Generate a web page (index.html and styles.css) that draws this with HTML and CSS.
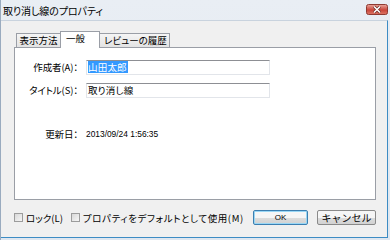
FILE: index.html
```html
<!DOCTYPE html>
<html lang="ja">
<head>
    <meta charset="UTF-8">
    <title>取り消し線のプロパティ</title>
    <link rel="stylesheet" href="styles.css">
</head>
<body>
    <div class="window">
        <div class="titlebar">
            <span class="title">取り消し線のプロパティ</span>
            <svg class="shut" width="22" height="11" viewBox="0 0 22 11">
                <defs>
                    <linearGradient id="red" x1="0" y1="0" x2="0" y2="1">
                        <stop offset="0" stop-color="#eaa89e"/>
                        <stop offset="0.55" stop-color="#c9453a"/>
                        <stop offset="1" stop-color="#dc7867"/>
                    </linearGradient>
                </defs>
                <rect x="0.5" y="0.5" width="21" height="10" rx="2" fill="url(#red)" stroke="#8e3a32"/>
                <path d="M8 2.5 L14 8.5 M14 2.5 L8 8.5" stroke="#6a2a24" stroke-width="3"/>
                <path d="M8 2.5 L14 8.5 M14 2.5 L8 8.5" stroke="#fff" stroke-width="1.6"/>
            </svg>
        </div>
        <div class="client">
            <div class="tabs">
                <div class="tab first">表示方法</div>
                <div class="tab active">一般</div>
                <div class="tab last">レビューの履歴</div>
            </div>
            <div class="panel">
                <div class="form">
                    <span class="label">作成者(A)：</span>
                    <div class="input"><span class="selected">山田太郎</span></div>
                    <span class="label">タイトル(S)：</span>
                    <div class="input">取り消し線</div>
                    <span class="label date-row">更新日：</span>
                    <span class="date date-row">2013/09/24 1:56:35</span>
                </div>
            </div>
            <div class="footer">
                <label class="check"><span class="box"></span>ロック(L)</label>
                <label class="check wide"><span class="box"></span>プロパティをデフォルトとして使用(M)</label>
                <button class="btn default">OK</button>
                <button class="btn cancel">キャンセル</button>
            </div>
        </div>
    </div>
</body>
</html>
```

FILE: styles.css
```css
body {
    margin: 0;
    font-family: "Noto Sans CJK JP", "Noto Sans", sans-serif;
    font-size: 9.5px;
    font-feature-settings: "palt";
    color: #000;
    background: #e6ecf2;
}

.window {
    width: 390px;
    height: 240px;
    box-sizing: border-box;
    background: linear-gradient(#e9eef4, #dfe7f0); /* light window frame */
    border-left: 1px solid #9aabbf;
    display: flex;
    flex-direction: column;
}

.titlebar {
    height: 20px;
    flex: none;
    display: grid;
    grid-template-columns: 1fr 22px;
    column-gap: 2px;
    align-items: start;
    padding-right: 2px;
}

.title {
    margin: 4px 0 0 2px;
    font-size: 10px;
    line-height: 13px;
    letter-spacing: -0.1px;
}

.shut {
    display: block;
    margin-top: 4px;
}

.client {
    flex: 1;
    margin: 0 2px 2px 0;
    background: #f0f0f0;
    border-right: 1px solid #3d8cc4;
    border-bottom: 1px solid #3d8cc4;
    border-top: 1px solid #c9d3de;
    display: flex;
    flex-direction: column;
}

/* tab strip */
.tabs {
    display: flex;
    align-items: flex-end;
    margin: 10px 0 0 15px;
    position: relative;
    z-index: 1;
}

.tab {
    box-sizing: border-box;
    height: 14px;
    line-height: 13px;
    text-align: center;
    white-space: nowrap;
    border: 1px solid #9a9ea6;
    border-bottom: none;
    background: linear-gradient(#f5f5f5, #e3e3e3);
}

.tab.first {
    width: 44px;
    border-right: none;
}

.tab.last {
    width: 70px;
    border-left: none;
    padding-left: 2px;
}

.tab.active {
    height: 17px;
    width: 40px;
    line-height: 12px;
    text-align: left;
    padding-left: 5px;
    background: #fff;
    margin-bottom: -1px;
}

.panel {
    margin-left: 13px;
    width: 362px;
    height: 153px;
    box-sizing: border-box;
    background: #fff;
    border: 1px solid #9a9ea6;
}

.form {
    display: grid;
    grid-template-columns: 63px 184px;
    column-gap: 8px;
    row-gap: 8px;
    padding-top: 12px;
    align-items: center;
}

.label {
    text-align: right;
    line-height: 15px;
    letter-spacing: -0.1px;
}

.input {
    height: 15px;
    box-sizing: border-box;
    border: 1px solid #e2e5ea;
    border-top-color: #8d8f94;
    padding-left: 1px;
    line-height: 12px;
    letter-spacing: 0.2px;
}

.selected {
    display: inline-block;
    background: #3399ff;
    color: #fff;
    line-height: 12px;
    padding-right: 1px;
}

.date-row {
    margin-top: 21px;
}

.date {
    font-family: "Liberation Sans", sans-serif;
    font-size: 8.4px;
    font-feature-settings: normal;
    line-height: 15px;
}

/* bottom row */
.footer {
    display: flex;
    align-items: center;
    padding: 10px 11px 0 13px;
}

.check {
    display: flex;
    align-items: center;
    gap: 3px;
    margin-right: 8px;
    line-height: 12px;
}

.check.wide {
    letter-spacing: 0.6px;
}

.box {
    width: 9px;
    height: 9px;
    box-sizing: border-box;
    border: 1px solid #9c9c9c;
    background: linear-gradient(135deg, #d8d8d8, #f6f6f6);
}

.btn {
    height: 15px;
    padding: 0;
    border: 1px solid #8a8a8a;
    border-radius: 2px;
    background: linear-gradient(#f6f6f6 50%, #dddddd 50%, #d2d2d2);
    font-family: "Noto Sans CJK JP", sans-serif;
    font-size: 9.5px;
    line-height: 12px;
    color: #000;
}

.btn.default {
    width: 55px;
    margin-left: auto;
    margin-right: 9px;
    border-color: #3c7fb1;
    box-shadow: inset 0 0 0 1px #9ad7f5;
    font-family: "Liberation Sans", sans-serif;
    font-size: 8px;
}

.btn.cancel {
    width: 59px;
    font-size: 10px;
}
```
